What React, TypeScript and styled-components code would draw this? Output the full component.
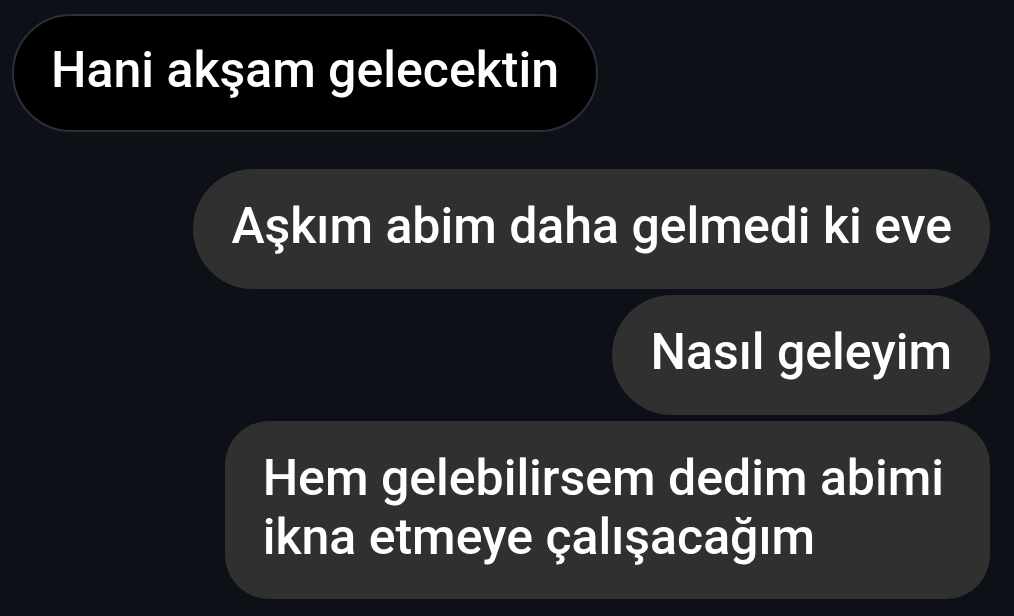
import React from "react";
import styled, { createGlobalStyle } from "styled-components";

const Global = createGlobalStyle`
  html, body { margin: 0; padding: 0; background: #0d1117; }
  body { font-family: Roboto, "Noto Sans", "Liberation Sans", sans-serif; }
`;

const Page = styled.div`
  width: 1014px;
  height: 616px;
  box-sizing: border-box;
  padding: 14px 24px 0 12px;
  display: flex;
  flex-direction: column;
  overflow: hidden;
`;

const Group = styled.div<{ $side: "left" | "right" }>`
  display: flex;
  flex-direction: column;
  align-items: ${(p) => (p.$side === "left" ? "flex-start" : "flex-end")};
  gap: 6px;
  & + & { margin-top: 37px; }
`;

const Bubble = styled.div<{ $incoming?: boolean; $multi?: boolean }>`
  box-sizing: border-box;
  padding: ${(p) =>
    p.$incoming ? "25px 37px 30px" : p.$multi ? "28px 46px 32px 38px" : "28px 38px 33px"};
  background: ${(p) => (p.$incoming ? "#000000" : "#303030")};
  border: ${(p) => (p.$incoming ? "2px solid #2b2f36" : "none")};
  border-radius: ${(p) => (p.$multi ? "44px" : "60px")};
  color: #ffffff;
  font-size: 50px;
  font-weight: 500;
  line-height: 59px;
  white-space: nowrap;
`;

export default function App() {
  return (
    <>
      <Global />
      <Page>
        <Group $side="left">
          <Bubble $incoming>Hani akşam gelecektin</Bubble>
        </Group>
        <Group $side="right">
          <Bubble>Aşkım abim daha gelmedi ki eve</Bubble>
          <Bubble>Nasıl geleyim</Bubble>
          <Bubble $multi>
            Hem gelebilirsem dedim abimi
            <br />
            ikna etmeye çalışacağım
          </Bubble>
        </Group>
      </Page>
    </>
  );
}
